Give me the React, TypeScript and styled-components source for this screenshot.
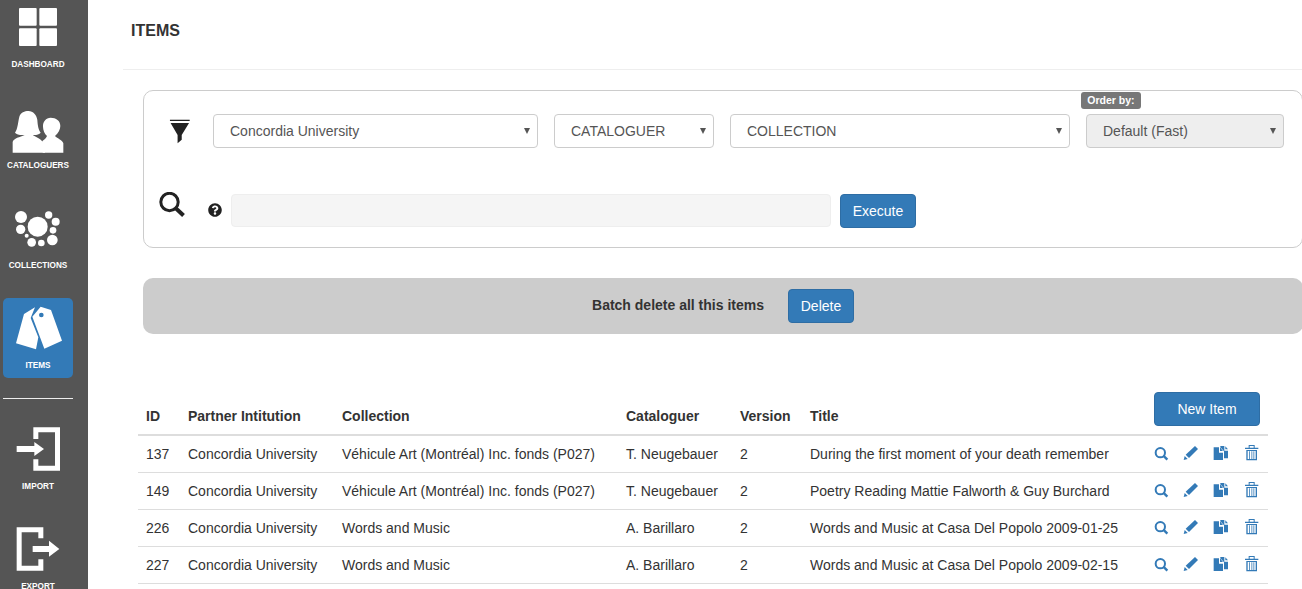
import React from 'react';
import styled, { createGlobalStyle } from 'styled-components';
import { FaQuestionCircle } from 'react-icons/fa';

const GlobalStyle = createGlobalStyle`
  html, body {
    margin: 0;
    height: 100%;
    overflow: hidden;
    background: #fff;
    font-family: "Liberation Sans", Arial, sans-serif;
    font-size: 14px;
    color: #333;
  }
`;

const Page = styled.div`
  display: flex;
  width: 1302px;
  height: 589px;
  overflow: hidden;
`;

const Sidebar = styled.nav`
  flex: 0 0 88px;
  height: 589px;
  overflow: hidden;
  background: #555;
  display: flex;
  flex-direction: column;
  gap: 20px;
  padding: 0 15px 0 3px;
  box-sizing: border-box;
`;

const NavList = styled.div<{ $top: number }>`
  display: flex;
  flex-direction: column;
  gap: 20px;
  margin-top: ${(p) => p.$top}px;
`;

const NavItem = styled.a<{ $active?: boolean; $height?: number }>`
  flex: 0 0 ${(p) => p.$height ?? 80}px;
  height: ${(p) => p.$height ?? 80}px;
  border-radius: 5px;
  background: ${(p) => (p.$active ? '#337ab7' : 'transparent')};
  display: flex;
  flex-direction: column;
  align-items: center;
  svg {
    display: block;
    width: 70px;
    height: 60px;
    fill: #fff;
  }
`;

const NavLabel = styled.span`
  margin-top: 1px;
  font-size: 8.2px;
  font-weight: 700;
  line-height: 14px;
  color: #fff;
`;

const Divider = styled.hr`
  border: 0;
  height: 1px;
  width: 70px;
  background: #eee;
  margin: 0 0 20px;
`;

const Main = styled.main`
  flex: 1;
  min-width: 0;
  margin-left: 35px;
`;

const Header = styled.header`
  border-bottom: 1px solid #eee;
  padding: 21px 8px 0;
  height: 48px;
`;

const Title = styled.h1`
  margin: 0;
  font-size: 16px;
  line-height: 20px;
  font-weight: 700;
  color: #333;
`;

const FilterPanel = styled.section`
  margin: 20px 0 0 20px;
  width: 1160px;
  height: 158px;
  box-sizing: border-box;
  border: 1px solid #ccc;
  border-radius: 10px;
  padding-top: 23px;
`;

const FilterRow = styled.div`
  display: flex;
  align-items: center;
  padding-left: 25px;
  gap: 16px;
`;

const FunnelIcon = styled.svg`
  width: 21px;
  height: 25px;
  margin-right: 7px;
  fill: #222;
`;

const SelectBox = styled.div<{ $width: number }>`
  position: relative;
  width: ${(p) => p.$width}px;
  &::after {
    content: '';
    position: absolute;
    right: 8px;
    top: 14px;
    border-top: 6px solid #555;
    border-left: 3px solid transparent;
    border-right: 3px solid transparent;
    pointer-events: none;
  }
`;

const Select = styled.select`
  appearance: none;
  width: 100%;
  height: 34px;
  box-sizing: border-box;
  display: block;
  padding: 0 16px;
  border: 1px solid #ccc;
  border-radius: 4px;
  background: #fff;
  color: #555;
  opacity: 1;
  font-family: inherit;
  font-size: 14px;
  &:disabled {
    background: #eee;
    color: #555;
  }
`;

const OrderLabel = styled.span`
  position: absolute;
  left: -5px;
  top: -22px;
  height: 17px;
  padding: 0 6.3px;
  border-radius: 3px;
  background: #777;
  color: #fff;
  font-size: 10.5px;
  font-weight: 700;
  line-height: 17px;
  white-space: nowrap;
`;

const SearchRow = styled.div`
  display: flex;
  align-items: flex-start;
  margin-top: 46px;
  padding-left: 15px;
`;

const SearchIcon = styled.svg`
  width: 26px;
  height: 26px;
  margin: -2px 23px 0 0;
  fill: none;
  stroke: #222;
`;

const HelpIcon = styled(FaQuestionCircle)`
  width: 14px;
  height: 14px;
  margin: 9px 9px 0 0;
  color: #222;
`;

const QueryInput = styled.input`
  width: 600px;
  height: 33px;
  box-sizing: border-box;
  border: 1px solid #eee;
  border-radius: 4px;
  background: #f5f5f5;
  margin-right: 9px;
`;

const Button = styled.button<{ $width: number }>`
  height: 34px;
  width: ${(p) => p.$width}px;
  padding: 0;
  display: block;
  border: 1px solid #2e6da4;
  border-radius: 4px;
  background: #337ab7;
  color: #fff;
  font-family: inherit;
  font-size: 14px;
`;

const BatchBar = styled.section`
  margin: 30px 0 0 20px;
  width: 1160px;
  height: 56px;
  border-radius: 10px;
  background: #ccc;
  display: flex;
  align-items: center;
  justify-content: center;
  gap: 24px;
  box-sizing: border-box;
`;

const BatchText = styled.b`
  font-size: 14px;
  color: #333;
  padding-bottom: 2px;
`;

const Table = styled.table`
  margin: 50px 0 0 15px;
  width: 1130px;
  table-layout: fixed;
  border-collapse: separate;
  border-spacing: 0;
  th, td {
    padding: 8px;
    line-height: 20px;
    text-align: left;
    color: #333;
    white-space: nowrap;
    font-size: 14px;
  }
  th {
    vertical-align: bottom;
    border-bottom: 2px solid #ddd;
    font-weight: 700;
  }
  td {
    height: 20px;
    border-bottom: 1px solid #ddd;
  }
`;

const Actions = styled.div`
  display: flex;
  align-items: flex-start;
  gap: 14px;
  height: 20px;
  svg {
    display: block;
    height: 16px;
    margin-top: 1px;
    fill: #337ab7;
  }
`;

const columns = [42, 154, 284, 114, 70, 344, 122];

const rows = [
  ['137', 'Concordia University', 'Véhicule Art (Montréal) Inc. fonds (P027)', 'T. Neugebauer', '2', 'During the first moment of your death remember'],
  ['149', 'Concordia University', 'Véhicule Art (Montréal) Inc. fonds (P027)', 'T. Neugebauer', '2', 'Poetry Reading Mattie Falworth & Guy Burchard'],
  ['226', 'Concordia University', 'Words and Music', 'A. Barillaro', '2', 'Words and Music at Casa Del Popolo 2009-01-25'],
  ['227', 'Concordia University', 'Words and Music', 'A. Barillaro', '2', 'Words and Music at Casa Del Popolo 2009-02-15'],
];

const RowActions = () => (
  <Actions>
    <svg viewBox="73 180 45 48" width="15">
      <circle cx="92" cy="203" r="14" fill="none" stroke="#337ab7" strokeWidth="6" />
      <path d="M101 212 L113 224" stroke="#337ab7" strokeWidth="7" />
    </svg>
    <svg viewBox="160 180 48 48" width="16">
      <path d="M162 225 L165 213 L174 222 Z" />
      <path d="M168 209 L196 183 L205 192 L178 219 Z" />
    </svg>
    <svg viewBox="250 180 48 48" width="16">
      <path d="M252 187 H268 V203 H280 V225 H252 Z" />
      <path d="M271 187 L280 198 H271 Z" />
      <path d="M272 183 H284 V197 H295 V220 H283 V199 L272 187 Z" />
      <path d="M287 184 L295 193 H287 Z" />
    </svg>
    <svg viewBox="339 180 48 48" width="16">
      <path d="M356 180 H374 V188 H385 V192 H345 V188 H356 Z M359 183 V188 H371 V183 Z" />
      <path d="M349 195 H381 V226 H349 Z M353 198 V222 H377 V198 Z" />
      <path d="M357 199 H360 V222 H357 Z M364 199 H367 V222 H364 Z M370 199 H373 V222 H370 Z" opacity="0.8" />
    </svg>
  </Actions>
);

export default function App() {
  return (
    <Page>
      <GlobalStyle />
      <Sidebar>
        <NavList $top={-3}>
          <NavItem $height={81}>
            <svg viewBox="9 -9 210 180">
              <rect x="57" y="24" width="53" height="53" rx="3" />
              <rect x="118" y="24" width="53" height="53" rx="3" />
              <rect x="57" y="85" width="53" height="53" rx="3" />
              <rect x="118" y="85" width="53" height="53" rx="3" />
            </svg>
            <NavLabel>DASHBOARD</NavLabel>
          </NavItem>
          <NavItem>
            <svg viewBox="9 294 210 180">
              <path d="M38 458 V426 C40 415 60 411 74 405 C60 406 50 404 45 398 C54 385 54 365 58 350 C62 338 74 333 85 333 C100 333 110 345 112 360 C113 375 115 390 122 398 C118 403 108 406 98 405 C108 412 122 415 126 424 L135 424 V458 Z" />
              <path d="M190 458 V430 C188 420 172 416 165 408 C175 400 181 388 181 378 C181 362 168 353 152 353 C138 353 128 365 129 380 C129 390 134 402 141 408 C138 415 134 418 128 422 V458 Z" />
            </svg>
            <NavLabel>CATALOGUERS</NavLabel>
          </NavItem>
          <NavItem>
            <svg viewBox="9 594 210 180">
              <circle cx="113" cy="680" r="30" />
              <circle cx="63" cy="651" r="18" />
              <circle cx="146" cy="645" r="11" />
              <circle cx="167" cy="665" r="12" />
              <circle cx="62" cy="688" r="14" />
              <circle cx="159" cy="691" r="10" />
              <circle cx="80" cy="707" r="6" />
              <circle cx="95" cy="727" r="13" />
              <circle cx="124" cy="729" r="10" />
              <circle cx="157" cy="720" r="16" />
            </svg>
            <NavLabel>COLLECTIONS</NavLabel>
          </NavItem>
          <NavItem $active>
            <svg viewBox="9 24 210 180">
              <path d="M72 72 L105 52 L92 84 L115 142 L108 178 L48 160 Z" />
              <path fillRule="evenodd" d="M97 80 L122 50 L153 60 L186 152 L133 176 Z M124 68 A7 7 0 1 0 124 82 A7 7 0 1 0 124 68 Z" />
            </svg>
            <NavLabel>ITEMS</NavLabel>
          </NavItem>
        </NavList>
        <div>
          <Divider />
          <NavList $top={0}>
            <NavItem>
              <svg viewBox="9 387 210 180">
                <path d="M100 412 H180 V542 H100 V508 H115 V527 H165 V427 H115 V447 H100 Z" />
                <path d="M50 468 H103 V456 L132 477 L103 498 V486 H50 Z" />
              </svg>
              <NavLabel>IMPORT</NavLabel>
            </NavItem>
            <NavItem>
              <svg viewBox="9 687 210 180">
                <path d="M50 712 H130 V745 H115 V727 H65 V827 H115 V808 H130 V842 H50 Z" />
                <path d="M98 768 H147 V752 L178 777 L147 800 V786 H98 Z" />
              </svg>
              <NavLabel>EXPORT</NavLabel>
            </NavItem>
          </NavList>
        </div>
      </Sidebar>

      <Main>
        <Header>
          <Title>ITEMS</Title>
        </Header>

        <FilterPanel>
          <FilterRow>
            <FunnelIcon viewBox="115 115 66 78">
              <rect x="118" y="117" width="62" height="4" />
              <path d="M120 127 H178 L155 165 V180 L142 191 V165 Z" />
            </FunnelIcon>
            <SelectBox $width={325}>
              <Select defaultValue="Concordia University">
                <option>Concordia University</option>
              </Select>
            </SelectBox>
            <SelectBox $width={160}>
              <Select defaultValue="CATALOGUER">
                <option>CATALOGUER</option>
              </Select>
            </SelectBox>
            <SelectBox $width={340}>
              <Select defaultValue="COLLECTION">
                <option>COLLECTION</option>
              </Select>
            </SelectBox>
            <SelectBox $width={198}>
              <OrderLabel>Order by:</OrderLabel>
              <Select disabled defaultValue="Default (Fast)">
                <option>Default (Fast)</option>
              </Select>
            </SelectBox>
          </FilterRow>
          <SearchRow>
            <SearchIcon viewBox="0 0 26 26">
              <circle cx="10.5" cy="10" r="8.7" strokeWidth="3" />
              <path d="M16.5 16 L24.5 23.5" strokeWidth="4" />
            </SearchIcon>
            <HelpIcon />
            <QueryInput />
            <Button $width={76}>Execute</Button>
          </SearchRow>
        </FilterPanel>

        <BatchBar>
          <BatchText>Batch delete all this items</BatchText>
          <Button $width={66}>Delete</Button>
        </BatchBar>

        <Table>
          <colgroup>
            {columns.map((w, i) => (
              <col key={i} width={w} />
            ))}
          </colgroup>
          <thead>
            <tr>
              <th>ID</th>
              <th>Partner Intitution</th>
              <th>Collection</th>
              <th>Cataloguer</th>
              <th>Version</th>
              <th>Title</th>
              <th>
                <Button $width={106}>New Item</Button>
              </th>
            </tr>
          </thead>
          <tbody>
            {rows.map((row) => (
              <tr key={row[0]}>
                {row.map((cell, i) => (
                  <td key={i}>{cell}</td>
                ))}
                <td>
                  <RowActions />
                </td>
              </tr>
            ))}
          </tbody>
        </Table>
      </Main>
    </Page>
  );
}
